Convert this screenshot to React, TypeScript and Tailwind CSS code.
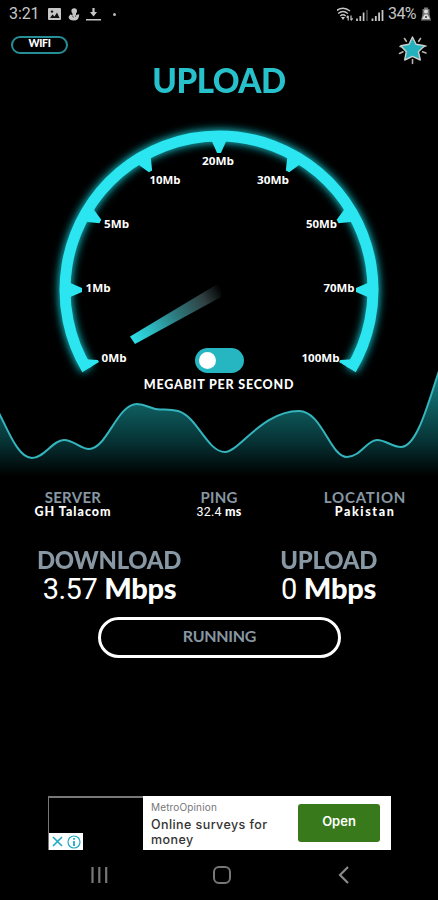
const CX = 219;
const CY = 190;

function polar(r: number, deg: number): [number, number] {
  const a = (deg * Math.PI) / 180;
  return [CX + r * Math.cos(a), CY - r * Math.sin(a)];
}

const pts = (list: [number, number][]) => list.map((p) => p.map((n) => n.toFixed(2)).join(',')).join(' ');

const TICKS = [0, 30, 60, 90, 120, 150, 180];

const LABELS = [
  { text: '0Mb', x: 101.5, y: 262, w: 25 },
  { text: '1Mb', x: 85.5, y: 192, w: 25 },
  { text: '5Mb', x: 104, y: 128, w: 25 },
  { text: '10Mb', x: 149.5, y: 83.5, w: 31 },
  { text: '20Mb', x: 202, y: 64.5, w: 32 },
  { text: '30Mb', x: 257, y: 83.5, w: 32 },
  { text: '50Mb', x: 306, y: 128, w: 31 },
  { text: '70Mb', x: 323.5, y: 192, w: 31 },
  { text: '100Mb', x: 301.5, y: 262, w: 38 },
];

const WAVE =
  'M-2 311 C8 330 18 358 32 358 C44 358 53 340 64 340 C74 340 80 349 89 349 C107 349 117 304 137 304 C147 304 150 309.5 160 309.5 C167 309.5 171 309 178 311 C197 316 207 352 225 352 C239 352 262 311 299 311 C322 311 330 357 347 357 C360 357 367 340 377 340 C386 340 392 347 401 347 C418 347 430 296 440 268';

function Gauge() {
  const [lx, ly] = polar(154, 211);
  const [rx, ry] = polar(154, -31);
  const arc = `M${lx} ${ly} A154 154 0 1 1 ${rx} ${ry}`;
  return (
    <svg className="col-start-1 row-start-1 block" width="438" height="390" viewBox="0 0 438 390">
      <defs>
        <filter id="glow" x="-20%" y="-20%" width="140%" height="140%">
          <feGaussianBlur stdDeviation="4.5" />
        </filter>
        <linearGradient id="waveFill" gradientUnits="userSpaceOnUse" x1="0" y1="270" x2="0" y2="376">
          <stop offset="0" stopColor="#1a8486" />
          <stop offset="0.35" stopColor="#0e5b5d" />
          <stop offset="0.7" stopColor="#062f31" />
          <stop offset="1" stopColor="#000000" />
        </linearGradient>
        <linearGradient id="needle" gradientUnits="userSpaceOnUse" x1="132" y1="240" x2="221" y2="188">
          <stop offset="0" stopColor="#2ce0e8" />
          <stop offset="0.2" stopColor="#2dbcc3" />
          <stop offset="0.5" stopColor="#2c777b" />
          <stop offset="0.8" stopColor="#303f40" />
          <stop offset="1" stopColor="#000000" />
        </linearGradient>
      </defs>
      <path d={`${WAVE} V378 H-2 Z`} fill="url(#waveFill)" />
      <path d={WAVE} fill="none" stroke="#34b4bd" strokeWidth="2" />
      <path d={arc} fill="none" stroke="#18c4cd" strokeWidth="13" filter="url(#glow)" />
      <path d={arc} fill="none" stroke="#2be6f0" strokeWidth="11" />
      <g fill="#2be6f0">
        {TICKS.map((t) => (
          <polygon key={t} points={pts([polar(150, t + 2.9), polar(137, t + 0.8), polar(137, t - 0.8), polar(150, t - 2.9)])} />
        ))}
        <polygon points={pts([polar(150, 207.5), polar(140, 210), polar(140, 211), polar(152, 211)])} />
        <polygon points={pts([polar(150, -27.5), polar(140, -30), polar(140, -31), polar(152, -31)])} />
      </g>
      <polygon points="130,236.5 135,244 221,197 222.5,181" fill="url(#needle)" />
      <g fill="#fff" fontFamily="'Open Sans', sans-serif" fontWeight="700" fontSize="11">
        {LABELS.map((l) => (
          <text key={l.text} x={l.x} y={l.y} textLength={l.w} lengthAdjust="spacingAndGlyphs">
            {l.text}
          </text>
        ))}
      </g>
    </svg>
  );
}

function StatusBar() {
  return (
    <header className="flex h-7 items-center justify-between pl-[9px] pr-[7px] font-['Roboto',sans-serif] font-normal text-[#c6c6c6]">
      <div className="flex items-center">
        <span className="w-[30px] text-[16px] leading-7 tracking-[-0.1px]">3:21</span>
        <svg className="ml-[9px]" width="13" height="12" viewBox="0 0 13 12">
          <rect width="13" height="12" rx="1" fill="#c6c6c6" />
          <path d="M2 10 L4.5 6.5 L6.5 8.5 L9 4.5 L11.5 10 Z" fill="#111" />
          <circle cx="4" cy="3.6" r="1.2" fill="#111" />
        </svg>
        <svg className="ml-[7px]" width="12" height="13" viewBox="0 0 12 13" fill="#c6c6c6">
          <circle cx="6.2" cy="3" r="2.8" />
          <path d="M4.5 4 H8 V7 L11.3 6.3 L10.8 9 Q10 12.5 6 12.5 Q1 12.5 0.5 9 L2.5 6.3 L4.5 7.5 Z" />
          <path d="M4 8 L6 9.5 M8 6.8 L7.4 9" stroke="#444" strokeWidth="0.7" />
        </svg>
        <svg className="ml-[6px]" width="15" height="13" viewBox="0 0 15 13" fill="#c6c6c6">
          <path d="M6.4 0 H8.6 V4 H11 L7.5 8.5 L4 4 H6.4 Z" />
          <rect y="11" width="15" height="1.5" />
        </svg>
        <span className="ml-[12px] size-[3px] rounded-full bg-[#b8b8b8]" />
      </div>
      <div className="flex items-center">
        <svg width="51" height="15" viewBox="0 0 51 15" fill="none" stroke="#c6c6c6">
          <path d="M-1 4 Q6 -1.5 13 4 M1.2 6.5 Q6 2.5 10.8 6.5 M3.3 9 Q6 6.5 8.7 9" strokeWidth="1.5" />
          <path d="M4 10 H8 L6 13 Z" fill="#c6c6c6" stroke="none" />
          <path d="M11.2 13.5 V9 M9.6 10.5 L11.2 8.6 M14 8.5 V13 M15.6 11.3 L14 13.5" strokeWidth="1.2" />
          <path d="M20 14 V11.5 M23.3 14 V9 M26.6 14 V5.5" strokeWidth="1.7" />
          <path d="M30 14 V3" strokeWidth="1.7" stroke="#4a4a4a" />
          <path d="M35.5 14 V11.5 M38.8 14 V9 M42.1 14 V5.5 M45.5 14 V3" strokeWidth="1.8" />
        </svg>
        <span className="w-[31px] whitespace-nowrap text-[16px] leading-7 tracking-[-0.6px]">34%</span>
        <svg className="ml-[2px]" width="10" height="14" viewBox="0 0 10 14">
          <path d="M3 0.5 H7 V2 H8.5 V7 L10 13.5 H0 L1.5 7 V2 H3 Z" fill="#777" />
          <circle cx="5" cy="4.5" r="2" fill="#ddd" />
          <path d="M1 12 L3.5 7.5 H6.5 L9 12 Z" fill="#ddd" />
          <circle cx="5" cy="10" r="1" fill="#333" />
        </svg>
      </div>
    </header>
  );
}

function StarButton() {
  return (
    <svg width="30" height="30" viewBox="0 0 30 30" strokeLinecap="round" strokeLinejoin="round">
      <path
        d="M6.5 3.5 L8.3 6.3 M22.5 3.5 L20.7 6.3 M2 11.5 L5 12 M28 11 L25 11.8 M1.5 18.5 L5 16.8 M28 18 L24.5 16.8 M14.5 24.5 V28.5"
        stroke="#b9b4ad"
        strokeWidth="1.6"
        fill="none"
      />
      <path
        d="M14.5 2 L18 9.2 L26.5 10.8 L20.4 16.7 L22.3 25 L14.5 21.4 L6.7 25 L8.3 16.7 L2.8 10.8 L11 9.2 Z"
        fill="#23b2bd"
        stroke="#c9cfcd"
        strokeWidth="1.4"
      />
    </svg>
  );
}

function Info({ label, value, labelStyle, valueStyle }: { label: string; value: React.ReactNode; labelStyle: string; valueStyle: string }) {
  return (
    <div className="flex w-[146px] flex-col items-center whitespace-nowrap">
      <span className={`text-[15px] leading-[15px] text-[#8797a3] ${labelStyle}`}>{label}</span>
      <span className={`text-[12.5px] font-black leading-[14px] text-white ${valueStyle}`}>{value}</span>
    </div>
  );
}

function Speed({ label, value }: { label: string; value: string }) {
  return (
    <div className="flex w-[219px] flex-col items-center whitespace-nowrap">
      <span className="scale-x-[0.935] text-[25.5px] font-black leading-7 tracking-[-0.3px] text-[#8797a3]">{label}</span>
      <span className="flex items-baseline gap-[7px] leading-[30px] text-white">
        <span className="font-['Roboto',sans-serif] text-[29px] font-normal tracking-[-0.5px]">{value}</span>
        <span className="text-[29px] font-black tracking-[-0.3px]">Mbps</span>
      </span>
    </div>
  );
}

export default function App() {
  return (
    <div className="flex h-[900px] w-[438px] flex-col overflow-hidden bg-black font-['Lato',sans-serif] font-bold">
      <StatusBar />
      <div className="flex h-9 items-start justify-between pl-[11px] pr-[10px]">
        <div className="mt-2 flex h-[18px] w-[57px] items-start justify-center overflow-hidden rounded-full border-2 border-[#258e96] text-[10.5px] font-black leading-[11px] tracking-[-0.3px] text-white">
          WIFI
        </div>
        <div className="mt-[7px]">
          <StarButton />
        </div>
      </div>
      <h1 className="flex h-9 scale-x-[0.945] items-start justify-center text-[35px] font-black leading-[30px] tracking-[-0.5px] text-[#27c1cc]">
        UPLOAD
      </h1>

      <section className="grid h-[390px] grid-cols-1">
        <Gauge />
        <div className="col-start-1 row-start-1 flex flex-col items-center pt-[248px]">
          <div className="flex h-[25px] w-[49px] items-center rounded-full bg-[#25b6c1] pl-1">
            <span className="size-[17px] rounded-full bg-white" />
          </div>
          <span className="mt-1 whitespace-nowrap text-[12.5px] font-black leading-4 tracking-[0.8px] text-white">MEGABIT PER SECOND</span>
        </div>
      </section>

      <section className="flex h-[55px] justify-between">
        <Info label="SERVER" value="GH Talacom" labelStyle="tracking-[0.3px]" valueStyle="tracking-[1px]" />
        <Info
          label="PING"
          value={
            <>
              <span className="font-['Roboto',sans-serif] font-normal">32.4</span> ms
            </>
          }
          labelStyle="tracking-[0.2px]"
          valueStyle="tracking-[0.2px]"
        />
        <Info label="LOCATION" value="Pakistan" labelStyle="tracking-[0.8px]" valueStyle="tracking-[1.6px]" />
      </section>
      <section className="flex h-[72px] justify-between">
        <Speed label="DOWNLOAD" value="3.57" />
        <Speed label="UPLOAD" value="0" />
      </section>
      <button className="ml-[98px] flex h-[41px] w-[243px] items-center justify-center rounded-full border-[3px] border-white pb-[3px] text-[16px] tracking-[-0.3px] text-[#8797a3]">
        RUNNING
      </button>

      <aside className="ml-12 mt-[138px] flex h-[54px] w-[343px] bg-white font-['Inter',sans-serif]">
        <div className="flex w-[95px] items-end border-l border-t-2 border-[#777] bg-black">
          <div className="flex h-[17px] w-[34px] items-center justify-center gap-[3px] bg-white">
            <svg width="13" height="13" viewBox="0 0 13 13" stroke="#1fa9c4" strokeWidth="1.6" fill="none">
              <path d="M2 2 L11 11 M11 2 L2 11" />
            </svg>
            <svg width="14" height="14" viewBox="0 0 14 14" stroke="#1fa9c4" fill="none">
              <circle cx="7" cy="7" r="6" strokeWidth="1.2" />
              <path d="M7 6 V11 M7 3 V4.8" strokeWidth="1.8" />
            </svg>
          </div>
        </div>
        <div className="flex-1 pl-2 pt-[5px]">
          <div className="text-[10px] font-normal leading-3 tracking-[0.15px] text-[#777]">MetroOpinion</div>
          <div className="mt-1 text-[12.5px] font-medium leading-[15px] tracking-[0.42px] text-[#333]">
            Online surveys for
            <br />
            money
          </div>
        </div>
        <div className="mr-[11px] mt-2 flex h-[38px] w-[82px] items-center justify-center rounded-[3px] bg-[#37791b] pb-0.5 text-[13px] font-semibold text-white">
          Open
        </div>
      </aside>

      <nav className="flex h-[50px] items-center">
        <svg className="ml-[91px]" width="17" height="17" viewBox="0 0 17 17" stroke="#777" strokeWidth="2.2">
          <path d="M1.5 0 V16 M8.3 0 V16 M15.2 0 V16" />
        </svg>
        <div className="ml-[105px] size-[18px] rounded-[6px] border-2 border-[#777]" />
        <svg className="ml-[107px]" width="12" height="18" viewBox="0 0 12 18" stroke="#8a8a8a" strokeWidth="2.2" fill="none">
          <path d="M10 1 L2 9 L10 17" />
        </svg>
      </nav>
    </div>
  );
}
